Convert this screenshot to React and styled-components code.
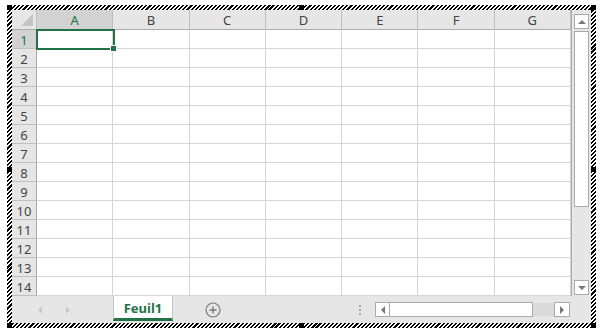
import { Fragment } from 'react';
import styled, { createGlobalStyle } from 'styled-components';

const GlobalStyle = createGlobalStyle`
  html, body {
    margin: 0;
    padding: 0;
    background: #fff;
  }
  body {
    font-family: "Noto Sans", "Open Sans", sans-serif;
  }
`;

const COLUMNS = ['A', 'B', 'C', 'D', 'E', 'F', 'G'];
const ROWS = Array.from({ length: 14 }, (_, i) => i + 1);

const Frame = styled.div`
  position: relative;
  box-sizing: border-box;
  width: 589px;
  height: 323px;
  margin: 5px 0 0 7px;
  padding: 5px;
  background: repeating-linear-gradient(
    -45deg,
    #000 0 1.5px,
    #fff 1.5px 2.9px
  );
`;

const Handle = styled.span`
  position: absolute;
  width: 5px;
  height: 5px;
  background: #000;
  left: ${(p) => p.$x};
  top: ${(p) => p.$y};
`;

const Inner = styled.div`
  display: flex;
  flex-direction: column;
  height: 100%;
  background: #fff;
`;

const Sheet = styled.div`
  display: flex;
  height: 286px;
  background: #e6e6e6;
`;

const Grid = styled.div`
  position: relative;
  display: grid;
  grid-template-columns: 25px repeat(7, 1fr);
  grid-template-rows: 20px repeat(14, 19px);
  width: 560px;
  background: #fff;
  border-right: 1px solid #ababab;
  border-bottom: 1px solid #ababab;
  box-sizing: border-box;
`;

const Corner = styled.div`
  position: relative;
  background: #e6e6e6;
  border-right: 1px solid #bfbfbf;
  border-bottom: 1px solid #ababab;
  &::after {
    content: '';
    position: absolute;
    right: 3px;
    bottom: 3px;
    border-style: solid;
    border-width: 0 0 12px 12px;
    border-color: transparent transparent #c4c4c4 transparent;
  }
`;

const ColHead = styled.div`
  display: flex;
  align-items: center;
  justify-content: center;
  background: ${(p) => (p.$active ? '#d2d2d2' : '#e6e6e6')};
  border-right: 1px solid #bfbfbf;
  border-bottom: 1px solid #ababab;
  color: ${(p) => (p.$active ? '#217346' : '#444')};
  font-size: 13px;
`;

const RowHead = styled.div`
  display: flex;
  align-items: center;
  justify-content: center;
  background: ${(p) => (p.$active ? '#d2d2d2' : '#e6e6e6')};
  border-right: 1px solid #ababab;
  border-bottom: 1px solid #bfbfbf;
  color: ${(p) => (p.$active ? '#217346' : '#444')};
  font-size: 13px;
  padding-top: 1px;
`;

const Cell = styled.div`
  border-right: 1px solid #d4d4d4;
  border-bottom: 1px solid #d4d4d4;
`;

const Selection = styled.div`
  position: absolute;
  left: 24px;
  top: 19px;
  width: 79px;
  height: 21px;
  border: 2px solid #217346;
  box-sizing: border-box;
  &::after {
    content: '';
    position: absolute;
    right: -4px;
    bottom: -4px;
    width: 5px;
    height: 5px;
    background: #217346;
    border: 1px solid #fff;
  }
`;

const VScroll = styled.div`
  flex: 1;
  display: flex;
  flex-direction: column;
  align-items: center;
  padding: 4px 0 1px;
  gap: 2px;
`;

const ScrollButton = styled.div`
  box-sizing: border-box;
  width: ${(p) => p.$w || '15px'};
  height: ${(p) => p.$h || '15px'};
  display: flex;
  align-items: center;
  justify-content: center;
  background: #fff;
  border: 1px solid #ababab;
`;

const Arrow = styled.span`
  width: 0;
  height: 0;
  border-style: solid;
  ${(p) =>
    p.$dir === 'up'
      ? 'border-width: 0 4px 4px 4px; border-color: transparent transparent #777 transparent;'
      : p.$dir === 'down'
      ? 'border-width: 4px 4px 0 4px; border-color: #777 transparent transparent transparent;'
      : p.$dir === 'left'
      ? `border-width: 4px 4px 4px 0; border-color: transparent ${p.$color || '#777'} transparent transparent;`
      : `border-width: 4px 0 4px 4px; border-color: transparent transparent transparent ${p.$color || '#777'};`}
`;

const VThumb = styled.div`
  box-sizing: border-box;
  width: 15px;
  height: 176px;
  background: #fff;
  border: 1px solid #ababab;
`;

const Spacer = styled.div`
  flex: 1;
`;

const TabBar = styled.div`
  display: flex;
  align-items: stretch;
  height: 27px;
  background: #e6e6e6;
`;

const Nav = styled.div`
  display: flex;
  align-items: center;
  gap: 24px;
  padding-left: 26px;
  width: 75px;
`;

const Tab = styled.div`
  box-sizing: border-box;
  width: 60px;
  height: 25px;
  display: flex;
  align-items: center;
  justify-content: center;
  background: #fff;
  border-left: 1px solid #c6c6c6;
  border-right: 1px solid #c6c6c6;
  border-bottom: 3px solid #217346;
  color: #217346;
  font-weight: 700;
  font-size: 13px;
  padding-top: 2px;
`;

const AddSheet = styled.div`
  display: flex;
  align-items: center;
  margin-left: 32px;
`;

const Dots = styled.div`
  display: flex;
  flex-direction: column;
  justify-content: center;
  gap: 2px;
  margin-left: 138px;
  & span {
    width: 2px;
    height: 2px;
    background: #a6a6a6;
  }
`;

const HScroll = styled.div`
  display: flex;
  align-items: center;
  margin-left: 14px;
`;

const HThumb = styled.div`
  box-sizing: border-box;
  width: 143px;
  height: 15px;
  background: #fff;
  border: 1px solid #ababab;
  border-left: none;
`;

const HTrack = styled.div`
  width: 21px;
  height: 13px;
  background: #dadada;
`;

function App() {
  return (
    <>
      <GlobalStyle />
      <Frame>
        <Handle $x="0" $y="0" />
        <Handle $x="292px" $y="0" />
        <Handle $x="584px" $y="0" />
        <Handle $x="0" $y="162px" />
        <Handle $x="584px" $y="162px" />
        <Handle $x="0" $y="318px" />
        <Handle $x="292px" $y="318px" />
        <Handle $x="584px" $y="318px" />
        <Inner>
          <Sheet>
            <Grid>
              <Corner />
              {COLUMNS.map((c) => (
                <ColHead key={c} $active={c === 'A'}>
                  {c}
                </ColHead>
              ))}
              {ROWS.map((r) => (
                <Fragment key={r}>
                  <RowHead $active={r === 1}>{r}</RowHead>
                  {COLUMNS.map((c) => (
                    <Cell key={c + r} />
                  ))}
                </Fragment>
              ))}
              <Selection />
            </Grid>
            <VScroll>
              <ScrollButton>
                <Arrow $dir="up" />
              </ScrollButton>
              <VThumb />
              <Spacer />
              <ScrollButton>
                <Arrow $dir="down" />
              </ScrollButton>
            </VScroll>
          </Sheet>
          <TabBar>
            <Nav>
              <Arrow $dir="left" $color="#c8c8c8" />
              <Arrow $dir="right" $color="#c8c8c8" />
            </Nav>
            <Tab>Feuil1</Tab>
            <AddSheet>
              <svg width="16" height="16" viewBox="0 0 16 16">
                <circle cx="8" cy="8" r="7" fill="none" stroke="#7a7a7a" strokeWidth="1.2" />
                <path d="M8 4.5v7M4.5 8h7" stroke="#7a7a7a" strokeWidth="1.4" />
              </svg>
            </AddSheet>
            <Dots>
              <span />
              <span />
              <span />
            </Dots>
            <HScroll>
              <ScrollButton $w="15px" $h="15px">
                <Arrow $dir="left" />
              </ScrollButton>
              <HThumb />
              <HTrack />
              <ScrollButton $w="16px" $h="15px">
                <Arrow $dir="right" />
              </ScrollButton>
            </HScroll>
          </TabBar>
        </Inner>
      </Frame>
    </>
  );
}

export default App;
